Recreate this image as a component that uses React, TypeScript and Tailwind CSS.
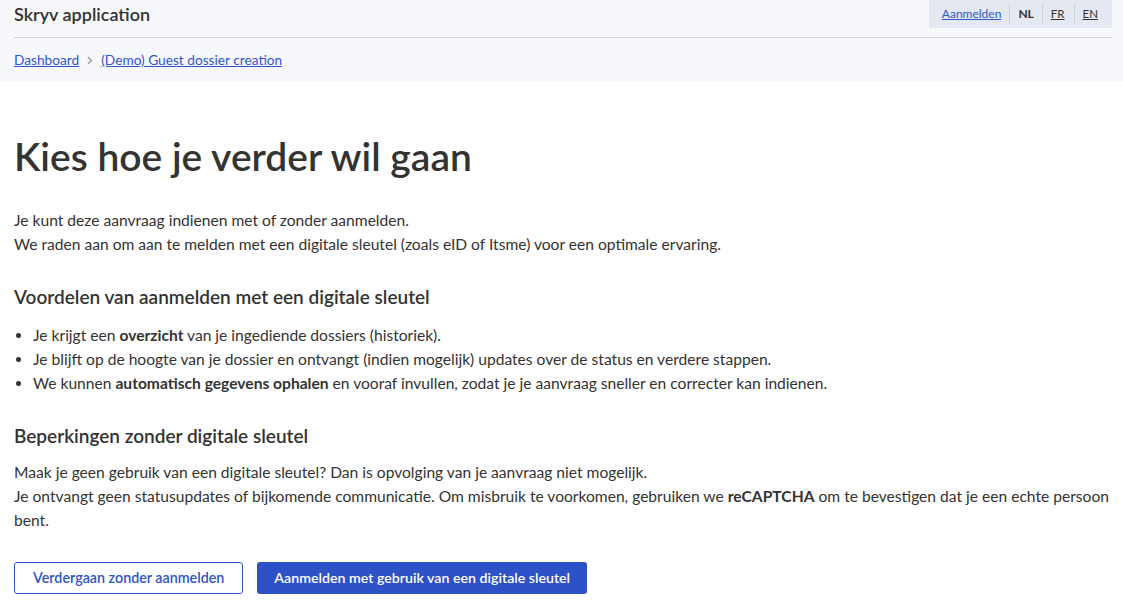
const font = { fontFamily: 'Lato, "Open Sans", sans-serif' }

function LangBar() {
  return (
    <div className="flex h-[28px] items-center bg-[#e4e8f0] pl-[13px] pr-[14px] text-[12px]">
      <a href="#" className="text-[#3056c9] underline">Aanmelden</a>
      <span className="mx-[8px] h-[20px] w-px bg-[#cfd3da]" />
      <span className="font-bold text-[#333332]">NL</span>
      <span className="mx-[8px] h-[20px] w-px bg-[#cfd3da]" />
      <a href="#" className="text-[11.5px] text-[#333332] underline">FR</a>
      <span className="ml-[9px] mr-[8px] h-[20px] w-px bg-[#cfd3da]" />
      <a href="#" className="text-[11.5px] text-[#333332] underline">EN</a>
    </div>
  )
}

function Chevron() {
  return (
    <svg width="6" height="9" viewBox="0 0 6 9" className="mx-[8px] mt-[1px]" fill="none">
      <path d="M1 1l3.5 3.5L1 8" stroke="#8a8d93" strokeWidth="1.1" />
    </svg>
  )
}

export default function App() {
  return (
    <div style={font} className="min-h-[608px] bg-white text-[#333332]">
      <header className="h-[81px] bg-[#f7f8fc] pl-[14px] pr-[11px]">
        <div className="flex h-[38px] items-start justify-between border-b border-[#d2d4d9]">
          <div className="pt-[1px] text-[18px] font-semibold">Skryv application</div>
          <LangBar />
        </div>
        <nav className="flex items-center pt-[12px] text-[13.7px]">
          <a href="#" className="text-[#3056c9] underline">Dashboard</a>
          <Chevron />
          <a href="#" className="text-[#3056c9] underline">(Demo) Guest dossier creation</a>
        </nav>
      </header>

      <main className="px-[14px] pt-[51px]">
        <h1 className="text-[39px] font-semibold leading-[48px]">Kies hoe je verder wil gaan</h1>

        <div className="mt-[28px] text-[15.6px] leading-[24px]">
          <p>Je kunt deze aanvraag indienen met of zonder aanmelden.</p>
          <p>We raden aan om aan te melden met een digitale sleutel (zoals eID of Itsme) voor een optimale ervaring.</p>
        </div>

        <h2 className="mt-[27px] text-[19px] font-semibold leading-[28px]">Voordelen van aanmelden met een digitale sleutel</h2>
        <ul className="mt-[12px] list-disc pl-[19px] text-[15.6px] leading-[24px]">
          <li>Je krijgt een <strong>overzicht</strong> van je ingediende dossiers (historiek).</li>
          <li>Je blijft op de hoogte van je dossier en ontvangt (indien mogelijk) updates over de status en verdere stappen.</li>
          <li>We kunnen <strong>automatisch gegevens ophalen</strong> en vooraf invullen, zodat je je aanvraag sneller en correcter kan indienen.</li>
        </ul>

        <h2 className="mt-[27px] text-[19px] font-semibold leading-[28px]">Beperkingen zonder digitale sleutel</h2>
        <div className="mt-[10px] text-[15.6px] leading-[24px]">
          <p>Maak je geen gebruik van een digitale sleutel? Dan is opvolging van je aanvraag niet mogelijk.</p>
          <p>
            Je ontvangt geen statusupdates of bijkomende communicatie. Om misbruik te voorkomen, gebruiken we <strong>reCAPTCHA</strong> om te bevestigen dat je een echte persoon bent.
          </p>
        </div>

        <div className="mt-[30px] flex gap-[14px]">
          <button className="h-[32px] rounded-[3px] border border-[#2f54c8] bg-white px-[18px] text-[14.3px] font-semibold text-[#2f54c8]">
            Verdergaan zonder aanmelden
          </button>
          <button className="h-[32px] rounded-[3px] bg-[#2d51c6] px-[17px] text-[14.2px] font-semibold text-white">
            Aanmelden met gebruik van een digitale sleutel
          </button>
        </div>
      </main>
    </div>
  )
}
